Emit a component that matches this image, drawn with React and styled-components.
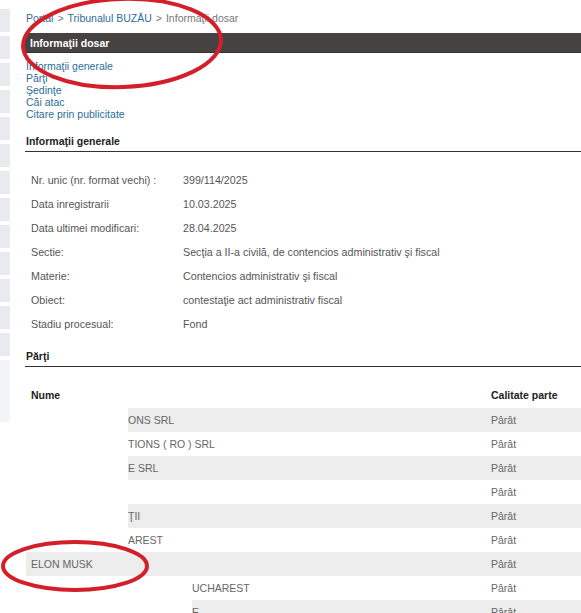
import React from 'react'
import styled, { createGlobalStyle } from 'styled-components'

const GlobalStyle = createGlobalStyle`
  html, body {
    margin: 0;
    background: #fff;
    overflow: hidden;
  }
  body {
    font-family: "Liberation Sans", Arial, sans-serif;
  }
`

const Page = styled.div`
  position: relative;
  width: 581px;
  height: 613px;
  display: grid;
  grid-template-columns: 10px 1fr;
  column-gap: 15px;
  overflow: hidden;
`

const Sidebar = styled.div`
  display: flex;
  flex-direction: column;
  gap: 4px;
  padding-top: 9px;
`

const SideBox = styled.div`
  height: ${(p) => p.h || 23}px;
  background: ${(p) => (p.light ? '#f3f4f6' : '#e8eaee')};
`

const Content = styled.div`
  display: flex;
  flex-direction: column;
  min-width: 0;
`

const Breadcrumb = styled.div`
  font-size: 10.5px;
  line-height: 12px;
  padding: 12px 0 0 1px;
  height: 21px;
  color: #777;
`

const Crumb = styled.a`
  color: #2f6c9e;
  text-decoration: none;
`

const Sep = styled.span`
  color: #777;
  margin: 0 4px;
`

const TitleBar = styled.div`
  height: 19px;
  background: #464242;
  border-bottom: 1px solid #343232;
  color: #fff;
  font-weight: bold;
  font-size: 10.5px;
  line-height: 20px;
  padding-left: 5px;
  width: 600px;
`

const LinkList = styled.div`
  display: flex;
  flex-direction: column;
  padding: 7px 0 0 1px;
`

const NavLink = styled.a`
  font-size: 10.5px;
  line-height: 12px;
  color: #2b6f97;
  text-decoration: none;
`

const SectionTitle = styled.div`
  font-size: 10.5px;
  font-weight: bold;
  color: #222;
  line-height: 12px;
  padding: 0 0 4px 1px;
  border-bottom: 1px solid #333;
  margin-top: ${(p) => p.top}px;
  width: 600px;
`

const InfoTable = styled.div`
  display: grid;
  grid-template-columns: 152px 1fr;
  grid-auto-rows: 24px;
  padding: 16px 0 0 6px;
  font-size: 10.7px;
  color: #555;
`

const InfoCell = styled.div`
  display: flex;
  align-items: center;
  white-space: nowrap;
`

const PartyTable = styled.div`
  display: flex;
  flex-direction: column;
  margin-top: 22px;
  width: 600px;
`

const PartyRow = styled.div`
  display: grid;
  grid-template-columns: 460px 1fr;
  height: ${(p) => (p.head ? 19 : 24)}px;
  margin-left: 1px;
  background: ${(p) => (p.alt ? '#ededed' : 'transparent')};
  font-size: 10.5px;
  color: ${(p) => (p.head ? '#222' : '#666')};
  font-weight: ${(p) => (p.head ? 'bold' : 'normal')};
`

const NameCell = styled.div`
  display: flex;
  align-items: ${(p) => (p.head ? 'flex-start' : 'center')};
  white-space: nowrap;
  padding-left: ${(p) => (p.mask ? 0 : 5)}px;
`

const Mask = styled.span`
  align-self: stretch;
  width: ${(p) => p.w}px;
  background: #fff;
  flex: none;
`

const RoleCell = styled.div`
  display: flex;
  align-items: ${(p) => (p.head ? 'flex-start' : 'center')};
  padding-left: 5px;
`

const Marks = styled.svg`
  position: absolute;
  left: 0;
  top: 0;
  pointer-events: none;
`

const info = [
  ['Nr. unic (nr. format vechi) :', '399/114/2025'],
  ['Data inregistrarii', '10.03.2025'],
  ['Data ultimei modificari:', '28.04.2025'],
  ['Sectie:', 'Secţia a II-a civilă, de contencios administrativ şi fiscal'],
  ['Materie:', 'Contencios administrativ şi fiscal'],
  ['Obiect:', 'contestaţie act administrativ fiscal'],
  ['Stadiu procesual:', 'Fond'],
]

const parties = [
  { mask: 102, name: 'ONS SRL' },
  { mask: 102, name: 'TIONS ( RO ) SRL' },
  { mask: 102, name: 'E SRL' },
  { mask: 102, name: '' },
  { mask: 102, name: 'ŢII' },
  { mask: 102, name: 'AREST' },
  { mask: 0, name: 'ELON MUSK' },
  { mask: 166, name: 'UCHAREST' },
  { mask: 166, name: 'E' },
]

const sideBoxes = Array.from({ length: 13 })

export default function App() {
  return (
    <>
      <GlobalStyle />
      <Page>
        <Sidebar>
          {sideBoxes.map((_, i) => (
            <SideBox key={i} />
          ))}
          <SideBox h={62} light />
        </Sidebar>
        <Content>
          <Breadcrumb>
            <Crumb>Portal</Crumb>
            <Sep>&gt;</Sep>
            <Crumb>Tribunalul BUZĂU</Crumb>
            <Sep>&gt;</Sep>
            Informaţii dosar
          </Breadcrumb>
          <TitleBar>Informaţii dosar</TitleBar>
          <LinkList>
            <NavLink>Informaţii generale</NavLink>
            <NavLink>Părţi</NavLink>
            <NavLink>Şedinţe</NavLink>
            <NavLink>Căi atac</NavLink>
            <NavLink>Citare prin publicitate</NavLink>
          </LinkList>
          <SectionTitle top={15}>Informaţii generale</SectionTitle>
          <InfoTable>
            {info.map(([label, value]) => (
              <React.Fragment key={label}>
                <InfoCell>{label}</InfoCell>
                <InfoCell>{value}</InfoCell>
              </React.Fragment>
            ))}
          </InfoTable>
          <SectionTitle top={14}>Părţi</SectionTitle>
          <PartyTable>
            <PartyRow head>
              <NameCell head>Nume</NameCell>
              <RoleCell head>Calitate parte</RoleCell>
            </PartyRow>
            {parties.map((p, i) => (
              <PartyRow key={i} alt={i % 2 === 0}>
                <NameCell mask={p.mask}>
                  {p.mask > 0 && <Mask w={p.mask} />}
                  {p.name}
                </NameCell>
                <RoleCell>Pârât</RoleCell>
              </PartyRow>
            ))}
          </PartyTable>
        </Content>
        <Marks width="581" height="613" viewBox="0 0 581 613">
          <ellipse cx="122" cy="43" rx="99" ry="44" fill="none" stroke="#d21f2a" strokeWidth="4" transform="rotate(-2 122 43)" />
          <ellipse cx="75" cy="566" rx="72" ry="24" fill="none" stroke="#d21f2a" strokeWidth="4" />
        </Marks>
      </Page>
    </>
  )
}
